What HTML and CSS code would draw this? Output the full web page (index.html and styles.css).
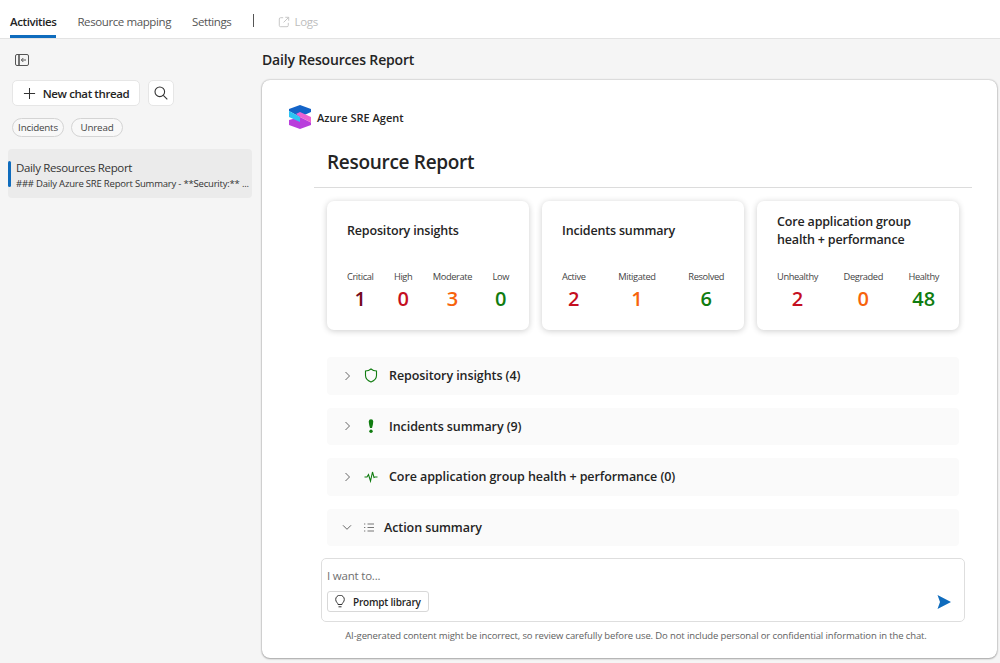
FILE: index.html
```html
<!DOCTYPE html>
<html lang="en">
<head>
    <meta charset="UTF-8">
    <title>Daily Resources Report</title>
    <link rel="stylesheet" href="styles.css">
</head>
<body>

<nav class="topbar">
    <a class="tab active">Activities</a>
    <a class="tab">Resource mapping</a>
    <a class="tab">Settings</a>
    <span class="tab-divider"></span>
    <a class="tab-logs">
        <svg width="12" height="12" viewBox="0 0 14 14" fill="none" stroke="#c4c4c4" stroke-width="1.1">
            <path d="M6 2H3a1.500 1.500 0 0 0-1.500 1.500v7.500A1.500 1.500 0 0 0 3 12.500h7.500A1.500 1.500 0 0 0 12 11V8"/>
            <path d="M8.500 1.500h4v4M12.500 1.500L6.500 7.500"/>
        </svg>
        Logs
    </a>
</nav>

<div class="layout">
    <aside class="sidebar">
        <button class="collapse-btn" aria-label="Collapse">
            <svg width="14" height="12" viewBox="0 0 14 12" fill="none" stroke="#555" stroke-width="1">
                <rect x="0.500" y="0.500" width="13" height="11" rx="1.500"/>
                <path d="M4 1v10" stroke-width="1.600"/>
                <path d="M11 6H6.500M8.300 4L6.300 6l2 2"/>
            </svg>
        </button>
        <div class="new-row">
            <button class="new-btn">
                <svg width="13" height="13" viewBox="0 0 14 14" stroke="#333" stroke-width="1.100"><path d="M7 1v12M1 7h12"/></svg>
                New chat thread
            </button>
            <button class="search-btn" aria-label="Search">
                <svg width="14" height="14" viewBox="0 0 14 14" fill="none" stroke="#333" stroke-width="1.100">
                    <circle cx="5.800" cy="5.800" r="4.800"/><path d="M9.300 9.300l4 4"/>
                </svg>
            </button>
        </div>
        <div class="chips">
            <span class="chip">Incidents</span>
            <span class="chip">Unread</span>
        </div>
        <div class="thread">
            <div class="thread-title">Daily Resources Report</div>
            <div class="thread-sub">### Daily Azure SRE Report Summary - **Security:** ...</div>
        </div>
    </aside>

    <main class="main">
        <h2 class="main-title">Daily Resources Report</h2>
        <section class="panel">
            <div class="brand">
                <svg width="24" height="24" viewBox="0 0 24 24">
                    <path d="M12 12L23 17.500V20L12 24L1 20V15Z" fill="#b93fdc"/>
                    <path d="M1 6V4L12 0L23 4V7L12 12Z" fill="#1464c8"/>
                    <path d="M1 6L12 12V17L1 12Z" fill="#2cc4f4"/>
                    <path d="M8 9L12 7L23 12V17.500L12 12Z" fill="#ee62d2"/>
                </svg>
                <span>Azure SRE Agent</span>
            </div>
            <h1 class="report-title">Resource Report</h1>
            <hr class="rule">

            <div class="cards">
                <div class="card">
                    <h3>Repository insights</h3>
                    <div class="stats">
                        <div class="stat"><span>Critical</span><b class="dark-red">1</b></div>
                        <div class="stat"><span>High</span><b class="red">0</b></div>
                        <div class="stat"><span>Moderate</span><b class="orange">3</b></div>
                        <div class="stat"><span>Low</span><b class="green">0</b></div>
                    </div>
                </div>
                <div class="card">
                    <h3>Incidents summary</h3>
                    <div class="stats">
                        <div class="stat"><span>Active</span><b class="red">2</b></div>
                        <div class="stat"><span>Mitigated</span><b class="orange">1</b></div>
                        <div class="stat"><span>Resolved</span><b class="green">6</b></div>
                    </div>
                </div>
                <div class="card">
                    <h3>Core application group health + performance</h3>
                    <div class="stats">
                        <div class="stat"><span>Unhealthy</span><b class="red">2</b></div>
                        <div class="stat"><span>Degraded</span><b class="orange">0</b></div>
                        <div class="stat"><span>Healthy</span><b class="green">48</b></div>
                    </div>
                </div>
            </div>

            <div class="accordion">
                <div class="acc-row">
                    <svg class="chev" width="10" height="10" viewBox="0 0 10 10" fill="none" stroke="#666"><path d="M3.500 1l4 4-4 4"/></svg>
                    <svg class="acc-icon" width="14" height="15" viewBox="0 0 14 15" fill="none" stroke="#107c10" stroke-width="1.100">
                        <path d="M7 1c1.500 1.300 3.400 2 5.500 2v4.500c0 3-2.200 5.100-5.500 6.500-3.300-1.400-5.500-3.500-5.500-6.500V3C3.600 3 5.500 2.300 7 1z"/>
                    </svg>
                    Repository insights (4)
                </div>
                <div class="acc-row">
                    <svg class="chev" width="10" height="10" viewBox="0 0 10 10" fill="none" stroke="#666"><path d="M3.500 1l4 4-4 4"/></svg>
                    <svg class="acc-icon" width="14" height="15" viewBox="0 0 14 15" fill="#107c10">
                        <path d="M4.800 2.400a2.200 2.200 0 0 1 4.400 0c0 2.200-.7 4.800-1.200 6.600H6C5.500 7.200 4.800 4.600 4.800 2.400z"/>
                        <circle cx="7" cy="12.300" r="1.700"/>
                    </svg>
                    Incidents summary (9)
                </div>
                <div class="acc-row">
                    <svg class="chev" width="10" height="10" viewBox="0 0 10 10" fill="none" stroke="#666"><path d="M3.500 1l4 4-4 4"/></svg>
                    <svg class="acc-icon" width="14" height="15" viewBox="0 0 14 15" fill="none" stroke="#107c10" stroke-width="1.100">
                        <path d="M0.500 8h2.500l1.500-2.500L6.500 12l2-9 1.500 5.500 1-.5h2.500"/>
                    </svg>
                    Core application group health + performance (0)
                </div>
                <div class="acc-row open">
                    <svg class="chev" width="10" height="10" viewBox="0 0 10 10" fill="none" stroke="#666"><path d="M1 3.300l4 4 4-4"/></svg>
                    <svg class="acc-icon small" width="10" height="9" viewBox="0 0 10 9" fill="none" stroke="#777">
                        <path d="M3.500 1H10M3.500 4.500H10M3.500 8H10"/>
                        <path d="M0 1h1.800M0 4.500h1.800M0 8h1.800" stroke-dasharray="1 .5"/>
                    </svg>
                    Action summary
                </div>
            </div>

            <div class="composer">
                <div class="composer-box">
                    <div class="placeholder">I want to...</div>
                    <div class="composer-foot">
                        <button class="prompt-btn">
                            <svg width="10" height="13" viewBox="0 0 10 13" fill="none" stroke="#333" stroke-width="1">
                                <path d="M3 9.500C3 8 .7 7 .7 4.500a4.300 4.300 0 0 1 8.600 0C9.300 7 7 8 7 9.500z"/>
                                <path d="M3.500 11.800h3"/>
                            </svg>
                            Prompt library
                        </button>
                        <svg class="send" width="14" height="14" viewBox="0 0 14 14" fill="#0f6cbd">
                            <path d="M0.500 0L14 7 0.500 14 3 7z"/>
                        </svg>
                    </div>
                </div>
                <p class="disclaimer">AI-generated content might be incorrect, so review carefully before use. Do not include personal or confidential information in the chat.</p>
            </div>
        </section>
    </main>
</div>

</body>
</html>
```

FILE: styles.css
```css
* {
    box-sizing: border-box;
}

html, body {
    margin: 0;
    height: 100%;
}

body {
    font-family: "Open Sans", "Noto Sans", sans-serif;
    background-color: #f5f5f5;
    color: #242424;
    overflow: hidden;
}

button {
    font-family: inherit;
    color: inherit;
    cursor: pointer;
}

/* top tabs */
.topbar {
    height: 39px;
    background: #fff;
    border-bottom: 1px solid #e3e3e3;
    display: flex;
    align-items: flex-start;
    padding-left: 10px;
}

.tab {
    font-size: 11.500px;
    letter-spacing: -0.4px;
    line-height: 16px;
    height: 38px;
    padding-top: 14px;
    margin-right: 21px;
    color: #555;
}

.tab.active {
    color: #242424;
    font-weight: 600;
    border-bottom: 3px solid #0f6cbd;
}

.tab-divider {
    width: 1px;
    height: 13px;
    margin: 14px 24px 0 1px;
    background: #555;
}

.tab-logs {
    display: flex;
    align-items: center;
    gap: 4px;
    font-size: 11.500px;
    letter-spacing: -0.3px;
    line-height: 16px;
    padding-top: 14px;
    color: #bdbdbd;
}

.layout {
    display: flex;
    height: 624px;
}

/* left column */
.sidebar {
    width: 262px;
    flex-shrink: 0;
    padding: 13px 10px 0 8px;
}

.collapse-btn {
    display: block;
    padding: 0;
    margin-left: 7px;
    height: 13px;
    border: 0;
    background: none;
}

.new-row {
    display: flex;
    gap: 8px;
    margin: 15px 0 0 4px;
}

.new-btn {
    width: 128px;
    height: 26px;
    display: flex;
    align-items: center;
    justify-content: center;
    gap: 7px;
    padding: 0;
    font-size: 11.500px;
    font-weight: 600;
    letter-spacing: -0.4px;
    background: #fff;
    border: 1px solid #e6e6e6;
    border-radius: 5px;
}

.search-btn {
    width: 26px;
    height: 26px;
    padding: 0;
    display: flex;
    align-items: center;
    justify-content: center;
    background: #fff;
    border: 1px solid #e6e6e6;
    border-radius: 5px;
}

.chips {
    display: flex;
    gap: 7px;
    margin: 12px 0 0 4px;
}

.chip {
    width: 52px;
    height: 19px;
    text-align: center;
    font-size: 9.800px;
    letter-spacing: -0.2px;
    line-height: 17px;
    color: #444;
    background: #f8f8f8;
    border: 1px solid #d4d4d4;
    border-radius: 10px;
}

.thread {
    height: 49px;
    margin-top: 12px;
    padding: 11px 0 0 8px;
    background: #ebebeb;
    border-radius: 4px;
    overflow: hidden;
    position: relative;
}

.thread::before {
    content: "";
    position: absolute;
    left: 0;
    top: 12px;
    width: 3px;
    height: 26px;
    background: #0f6cbd;
    border-radius: 2px;
}

.thread-title {
    font-size: 11.500px;
    letter-spacing: -0.35px;
    line-height: 16px;
    color: #333;
}

.thread-sub {
    font-size: 9.500px;
    letter-spacing: -0.2px;
    line-height: 14px;
    margin-top: 1px;
    color: #333;
    white-space: nowrap;
}

/* right column */
.main {
    flex: 1;
    min-width: 0;
    padding-right: 3px;
}

.main-title {
    margin: 0;
    height: 41px;
    padding-top: 11px;
    font-size: 14px;
    font-weight: 600;
    letter-spacing: -0.17px;
    line-height: 20px;
}

.panel {
    height: 578px;
    background: #fff;
    border-radius: 8px;
    box-shadow: 0 0 2px rgba(0, 0, 0, 0.35), 0 1px 2px rgba(0, 0, 0, 0.25);
    padding: 0 25px 0 52px;
    overflow: hidden;
    position: relative;
}

.brand {
    display: flex;
    align-items: center;
    gap: 5px;
    margin: 25px 0 0 -26px;
    height: 24px;
    font-size: 11px;
    font-weight: 600;
    letter-spacing: 0;
}

.report-title {
    margin: 20px 0 0 13px;
    font-size: 19px;
    font-weight: 600;
    letter-spacing: -0.3px;
    line-height: 26px;
}

.rule {
    margin: 12px 0 0 0;
    border: 0;
    border-top: 1px solid #dcdcdc;
}

.cards {
    display: flex;
    gap: 13px;
    margin: 13px 12px 0 13px;
}

.card {
    width: 202px;
    height: 129px;
    padding: 6px 20px 0;
    background: #fff;
    border-radius: 7px;
    box-shadow: 0 1px 6px rgba(0, 0, 0, 0.2);
    display: flex;
    flex-direction: column;
}

.card h3 {
    margin: 0;
    height: 48px;
    display: flex;
    align-items: center;
    font-size: 12.500px;
    font-weight: 600;
    letter-spacing: -0.17px;
    line-height: 18px;
    color: #242424;
}

.stats {
    display: flex;
    justify-content: space-between;
    margin-top: 15px;
}

.stat {
    display: flex;
    flex-direction: column;
    align-items: center;
}

.stat span {
    font-size: 9.300px;
    letter-spacing: -0.4px;
    line-height: 13px;
    color: #444;
}

.stat b {
    font-size: 20px;
    font-weight: 600;
    line-height: 26px;
    margin-top: 3px;
}

.dark-red { color: #750b1c; }
.red { color: #c50f1f; }
.orange { color: #f7630c; }
.green { color: #107c10; }

.accordion {
    margin: 27px 13px 0;
    display: flex;
    flex-direction: column;
    gap: 13px;
}

.acc-row {
    height: 37.500px;
    display: flex;
    align-items: center;
    padding-left: 15px;
    background: #fafafa;
    border-radius: 4px;
    font-size: 12.500px;
    font-weight: 600;
    letter-spacing: -0.08px;
}

.chev {
    flex-shrink: 0;
    margin-right: 12px;
}

.acc-icon {
    flex-shrink: 0;
    margin-right: 11px;
}

.acc-icon.small {
    margin-right: 10px;
}

.composer {
    position: absolute;
    left: 59px;
    right: 32px;
    top: 478px;
    background: #fff;
}

.composer-box {
    height: 64px;
    padding: 7px 5px 0;
    border: 1px solid #dedede;
    border-radius: 5px;
    background: #fff;
}

.placeholder {
    font-size: 11.500px;
    letter-spacing: -0.2px;
    line-height: 20px;
    color: #707070;
}

.composer-foot {
    display: flex;
    align-items: center;
    justify-content: space-between;
    margin-top: 5px;
    padding-right: 8px;
}

.prompt-btn {
    width: 102px;
    height: 21px;
    display: flex;
    align-items: center;
    gap: 8px;
    padding: 0 0 0 7px;
    font-size: 10px;
    font-weight: 600;
    letter-spacing: -0.2px;
    background: #fff;
    border: 1px solid #d8d8d8;
    border-radius: 3px;
}

.disclaimer {
    margin: 7px 0 0;
    padding-right: 14px;
    text-align: center;
    font-size: 9.500px;
    letter-spacing: -0.12px;
    line-height: 13px;
    color: #616161;
}
```
